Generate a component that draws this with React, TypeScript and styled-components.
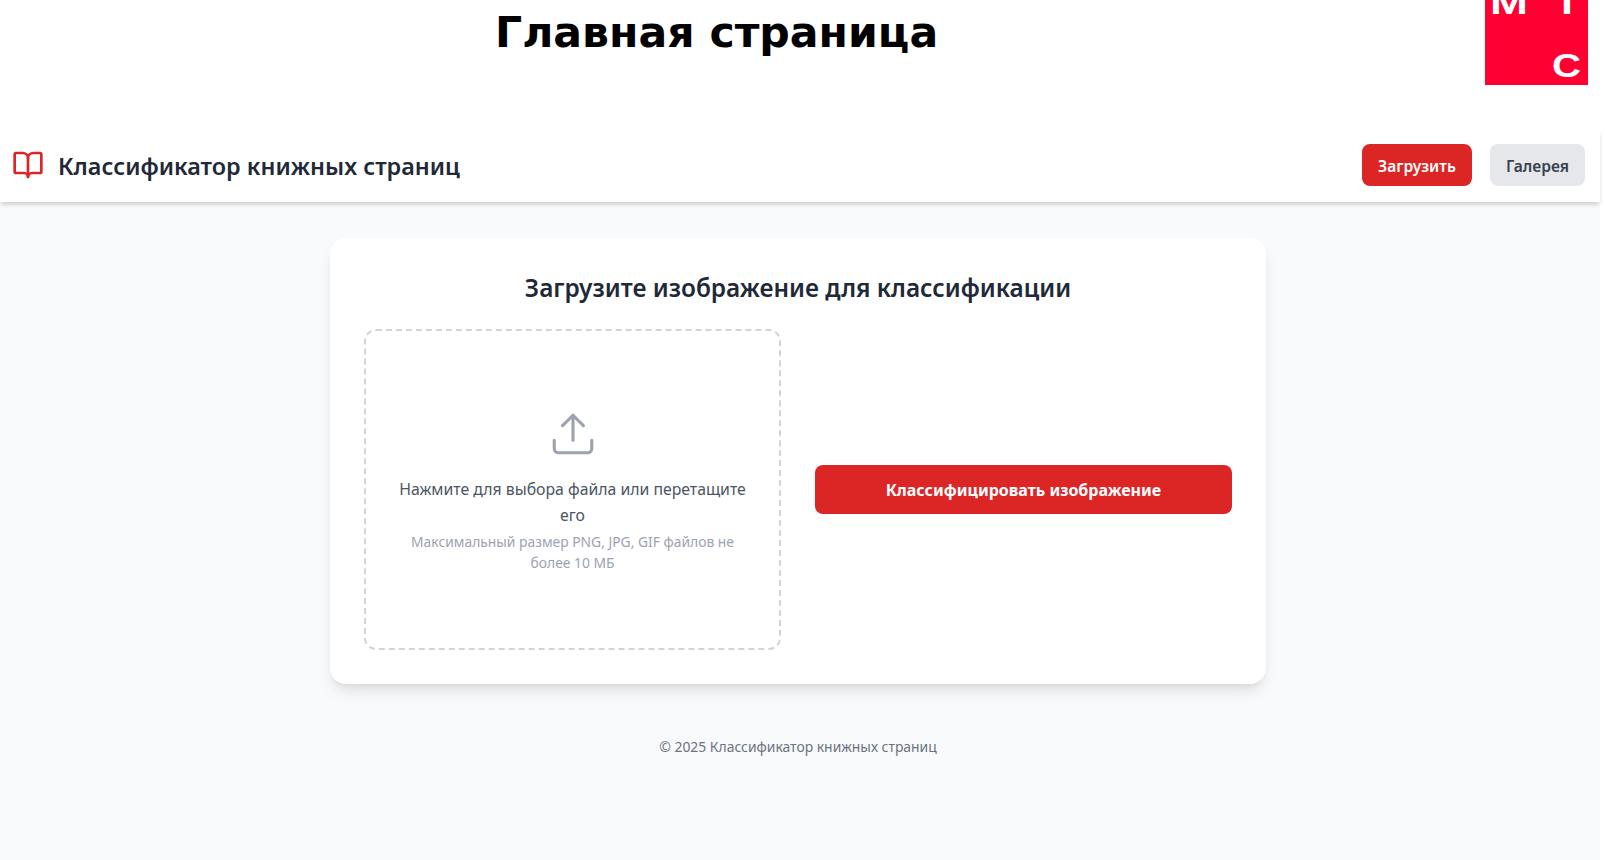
import React from "react";
import styled, { createGlobalStyle } from "styled-components";
import { BookOpen, Upload } from "lucide-react";

const Global = createGlobalStyle`
  html, body { margin: 0; padding: 0; background: #fff; }
  body { font-family: "Noto Sans", "Open Sans", "Liberation Sans", sans-serif; }
  * { box-sizing: border-box; }
`;

const Page = styled.div`
  width: 1600px;
  min-height: 860px;
  background: #f9fafb;
  display: flex;
  flex-direction: column;
`;

const Banner = styled.div`
  height: 130px;
  background: #fff;
  display: flex;
  justify-content: space-between;
  align-items: flex-start;
  padding: 0 12px 0 495px;
`;

const PageTitle = styled.h1`
  margin: 6px 0 0;
  font: 700 42.6px/52px "DejaVu Sans", sans-serif;
  color: #000;
`;

const LogoMark = styled.svg`
  display: block;
  width: 103px;
  height: 85px;
`;

const NavBar = styled.header`
  height: 72px;
  background: #fff;
  box-shadow: 0 3px 5px -1px rgba(0, 0, 0, 0.2);
  display: flex;
  justify-content: space-between;
  align-items: center;
  padding: 0 15px 2px 12px;
`;

const Brand = styled.div`
  display: flex;
  align-items: center;
  gap: 14px;
`;

const BrandName = styled.span`
  padding-top: 2px;
  font-size: 23.4px;
  line-height: 32px;
  font-weight: 600;
  color: #1f2937;
`;

const Actions = styled.nav`
  display: flex;
  gap: 18px;
`;

const NavButton = styled.button<{ $primary?: boolean }>`
  height: 42px;
  padding: 2px 16px 0;
  border: 0;
  border-radius: 8px;
  font: 600 15.6px/24px "Noto Sans", sans-serif;
  background: ${(p) => (p.$primary ? "#dc2626" : "#e5e7eb")};
  color: ${(p) => (p.$primary ? "#fff" : "#374151")};
`;

const Main = styled.main`
  display: flex;
  flex-direction: column;
  align-items: center;
  padding: 36px 4px 0 0;
`;

const Card = styled.section`
  width: 936px;
  height: 446px;
  padding: 32px 34px;
  background: #fff;
  border-radius: 16px;
  box-shadow: 0 10px 15px -3px rgba(0, 0, 0, 0.1), 0 4px 6px -4px rgba(0, 0, 0, 0.1);
`;

const CardTitle = styled.h2`
  margin: 0 0 23px;
  text-align: center;
  font-size: 24.4px;
  line-height: 36px;
  font-weight: 600;
  color: #1f2937;
`;

const Columns = styled.div`
  display: grid;
  grid-template-columns: 1fr 1fr;
  gap: 34px;
  align-items: center;
`;

const DropZone = styled.div`
  height: 321px;
  padding: 3px 28px 0;
  border: 2px dashed #d1d5db;
  border-radius: 12px;
  display: flex;
  flex-direction: column;
  align-items: center;
  justify-content: center;
  text-align: center;
`;

const DropIcon = styled(Upload)`
  color: #9ca3af;
  margin-bottom: 17px;
`;

const DropText = styled.p`
  margin: 0;
  font-size: 15.8px;
  line-height: 26px;
  color: #4b5563;
`;

const DropHint = styled.p`
  margin: 3px 0 0;
  font-size: 13.85px;
  line-height: 21px;
  color: #9ca3af;
`;

const ClassifyButton = styled.button`
  width: 100%;
  height: 49px;
  border: 0;
  border-radius: 8px;
  background: #dc2626;
  color: #fff;
  font: 700 16px/24px "Noto Sans", sans-serif;
`;

const Footer = styled.footer`
  margin-top: 53px;
  text-align: center;
  font-size: 13.9px;
  line-height: 20px;
  color: #6b7280;
`;

export default function App() {
  return (
    <Page>
      <Global />
      <Banner>
        <PageTitle>Главная страница</PageTitle>
        <LogoMark viewBox="0 0 103 85" role="img" aria-label="МТС">
          <rect width="103" height="85" fill="#ff0032" />
          <g fill="#fff" fontFamily="Liberation Sans, sans-serif" fontWeight="700" fontSize="34">
            <text x="5" y="14" textLength="38" lengthAdjust="spacingAndGlyphs">М</text>
            <text x="69" y="14" textLength="26" lengthAdjust="spacingAndGlyphs">Т</text>
            <text x="67" y="77" textLength="29" lengthAdjust="spacingAndGlyphs">С</text>
          </g>
        </LogoMark>
      </Banner>
      <NavBar>
        <Brand>
          <BookOpen size={32} color="#dc2626" strokeWidth={2} />
          <BrandName>Классификатор книжных страниц</BrandName>
        </Brand>
        <Actions>
          <NavButton $primary>Загрузить</NavButton>
          <NavButton>Галерея</NavButton>
        </Actions>
      </NavBar>
      <Main>
        <Card>
          <CardTitle>Загрузите изображение для классификации</CardTitle>
          <Columns>
            <DropZone>
              <DropIcon size={50} strokeWidth={1.5} />
              <DropText>Нажмите для выбора файла или перетащите его</DropText>
              <DropHint>Максимальный размер PNG, JPG, GIF файлов не более 10 МБ</DropHint>
            </DropZone>
            <ClassifyButton>Классифицировать изображение</ClassifyButton>
          </Columns>
        </Card>
        <Footer>© 2025 Классификатор книжных страниц</Footer>
      </Main>
    </Page>
  );
}
